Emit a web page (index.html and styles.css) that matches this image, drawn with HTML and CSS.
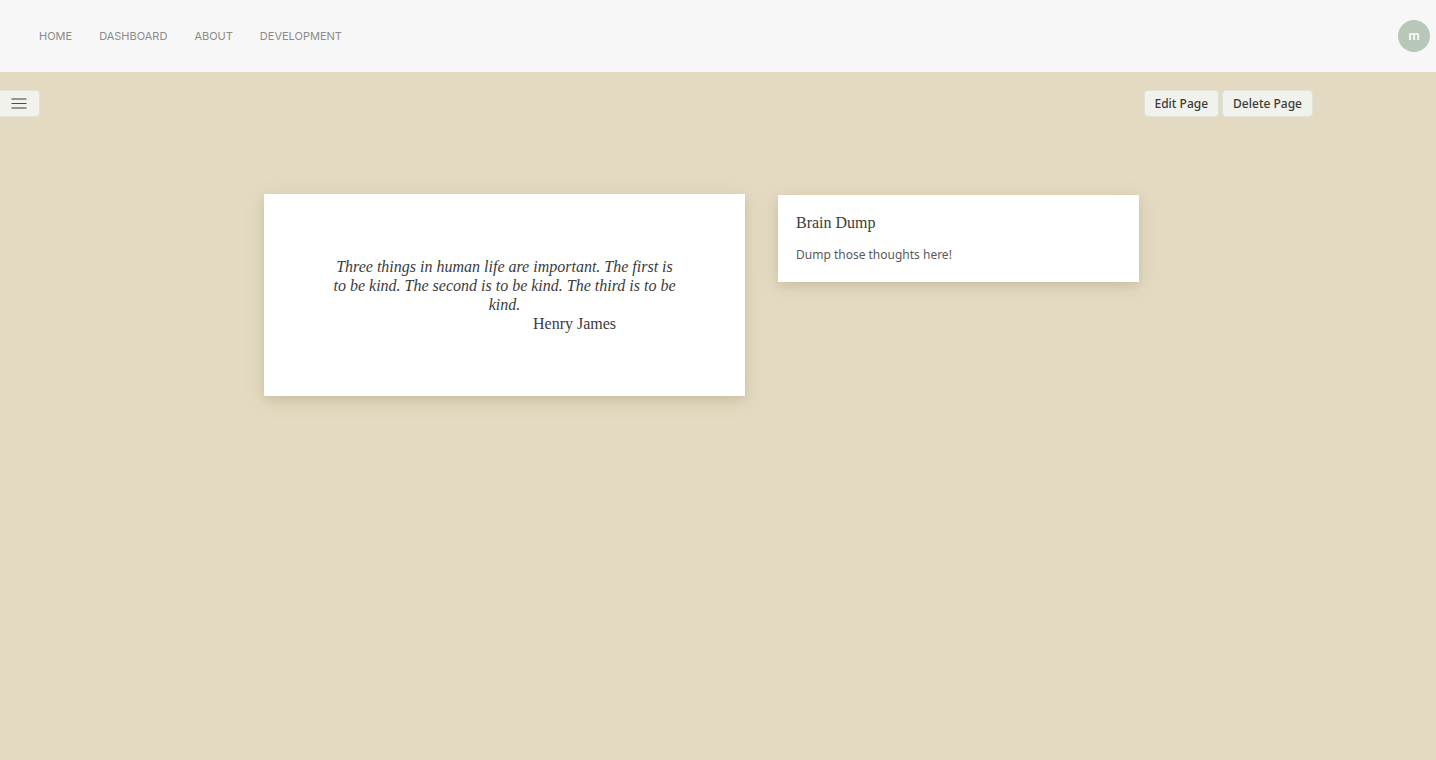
FILE: index.html
```html
<!DOCTYPE html>
<html lang="en">
<head>
<meta charset="utf-8">
<meta name="viewport" content="width=device-width, initial-scale=1">
<title>Dashboard</title>
<link rel="stylesheet" href="styles.css">
</head>
<body>
<header class="topbar">
  <nav class="nav" aria-label="Main">
    <a href="#">HOME</a>
    <a href="#">DASHBOARD</a>
    <a href="#">ABOUT</a>
    <a href="#">DEVELOPMENT</a>
  </nav>
  <button class="avatar" type="button" aria-label="Account: m">m</button>
</header>
<main>
  <div class="toolbar">
    <button class="btn menu" type="button" aria-label="Open menu">
      <svg width="16" height="12" viewBox="0 0 16 12" aria-hidden="true">
        <path d="M.5 1H15.5M.5 10H15.5" stroke="#94968f" stroke-width="2"/>
        <path d="M.5 5.5H15.5" stroke="#4c4e4a" stroke-width="1"/>
      </svg>
    </button>
    <div class="actions">
      <button class="btn" type="button">Edit Page</button>
      <button class="btn" type="button">Delete Page</button>
    </div>
  </div>
  <div class="cards">
    <figure class="card quote">
      <blockquote>Three things in human life are important. The first is to be kind. The second is to be kind. The third is to be kind.</blockquote>
      <figcaption>Henry James</figcaption>
    </figure>
    <section class="card note">
      <h2>Brain Dump</h2>
      <p>Dump those thoughts here!</p>
    </section>
  </div>
</main>
</body>
</html>
```

FILE: styles.css
```css
* { box-sizing: border-box; }

body {
  margin: 0;
  min-height: 100vh;
  background: #e4dac2;
  color: #3b3b3b;
  font-family: "Noto Sans", sans-serif;
}

.topbar {
  display: flex;
  align-items: center;
  justify-content: space-between;
  padding: 20px 6px 20px 39px;
  background: #f7f7f7;
}

.nav {
  display: flex;
  gap: 27px;
}

.nav a {
  color: #8b8b8b;
  font: 11px/16px Inter, sans-serif;
  text-decoration: none;
}

.avatar {
  width: 32px;
  height: 32px;
  padding: 0;
  border: 0;
  border-radius: 50%;
  background: #b7c8b8;
  color: #fff;
  font: 600 12px/32px "Noto Sans", sans-serif;
}

.toolbar {
  display: flex;
  align-items: center;
  justify-content: space-between;
  padding: 18px 123px 0 0;
}

.actions {
  display: flex;
  gap: 3px;
}

.btn {
  height: 27px;
  padding: 0 10px;
  border: 1px solid #e0e3dc;
  border-radius: 4px;
  background: #f1f2eb;
  color: #3b3b3b;
  font: 500 12px/24px "Noto Sans", sans-serif;
}

.menu {
  display: flex;
  align-items: center;
  padding: 0 12px 0 11px;
  border-left: 0;
  border-radius: 0 4px 4px 0;
}

.cards {
  display: grid;
  grid-template-columns: 481fr 361fr;
  align-items: start;
  gap: 33px;
  padding: 77px 297px 40px 264px;
}

.card {
  margin: 0;
  background: #fff;
  box-shadow: 0 4px 8px rgba(70, 30, 20, 0.08), 0 4px 20px rgba(110, 130, 60, 0.16);
}

.quote {
  padding: 63px 68px;
  font: 16px/19px "Liberation Serif", serif;
}

.quote blockquote {
  margin: 0;
  font-style: italic;
  text-align: center;
}

.quote figcaption {
  padding-left: 201px;
}

.note {
  margin-top: 1px;
  padding: 18px;
}

.note h2 {
  margin: 0 0 14px;
  font: 16px/19px "Liberation Serif", serif;
}

.note p {
  margin: 0;
  color: #595959;
  font-size: 12px;
  line-height: 18px;
}
```
